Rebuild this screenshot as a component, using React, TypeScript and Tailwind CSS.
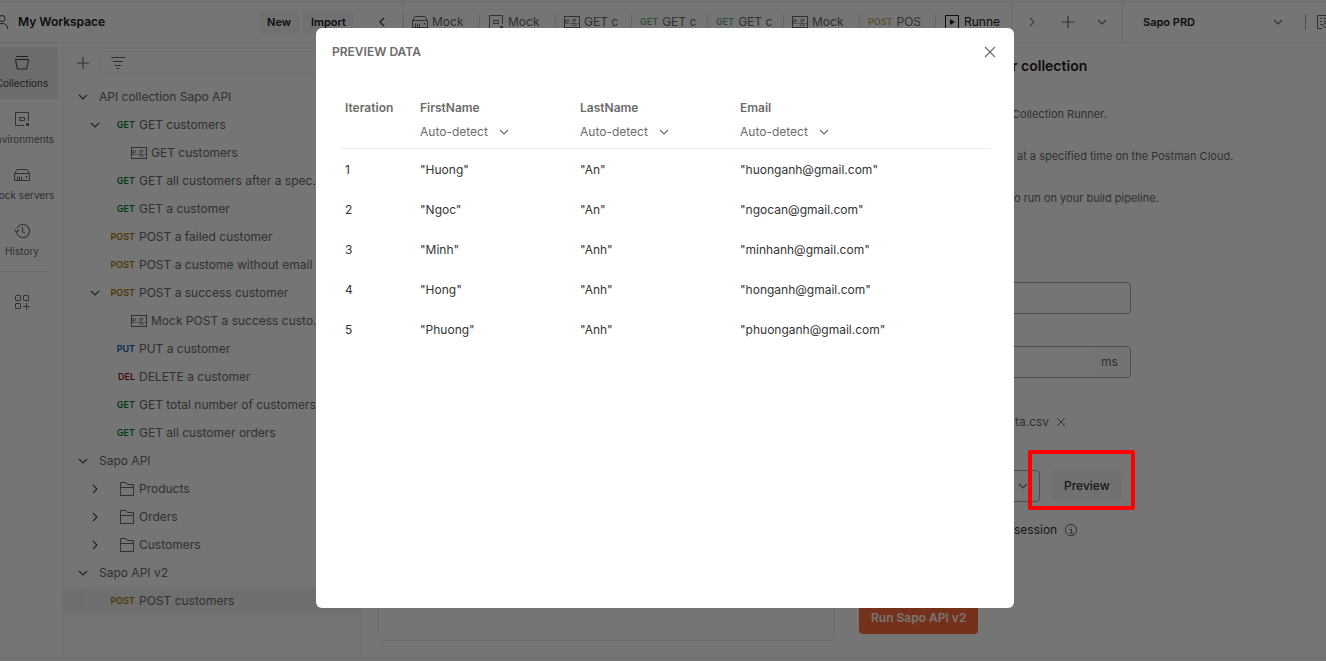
import type { ReactNode } from "react";

type IconProps = { className?: string };

function Glyph({ className = "size-4", children }: IconProps & { children: ReactNode }) {
  return (
    <svg
      viewBox="0 0 16 16"
      fill="none"
      stroke="currentColor"
      strokeWidth={1}
      className={`shrink-0 ${className}`}
      aria-hidden="true"
    >
      {children}
    </svg>
  );
}

const ChevronDown = (p: IconProps) => (
  <Glyph {...p}>
    <path d="M4 6l4 4 4-4" strokeWidth={1.1} />
  </Glyph>
);
const ChevronRight = (p: IconProps) => (
  <Glyph {...p}>
    <path d="M6 4l4 4-4 4" strokeWidth={1.1} />
  </Glyph>
);
const ChevronLeft = (p: IconProps) => (
  <Glyph {...p}>
    <path d="M10 4L6 8l4 4" strokeWidth={1.3} />
  </Glyph>
);
const Plus = (p: IconProps) => (
  <Glyph {...p}>
    <path d="M8 2v12M2 8h12" strokeWidth={1.2} />
  </Glyph>
);
const Close = (p: IconProps) => (
  <Glyph {...p}>
    <path d="M3 3l10 10M13 3L3 13" strokeWidth={1.1} />
  </Glyph>
);
const FilterLines = (p: IconProps) => (
  <Glyph {...p}>
    <path d="M1 2.5h14M3 6.5h10M4.5 10.5h7M6.5 13.5h3" />
  </Glyph>
);
const Person = (p: IconProps) => (
  <Glyph {...p}>
    <circle cx="8" cy="4.5" r="3" />
    <path d="M2.5 15v-1.5a5.5 4 0 0 1 11 0V15" />
  </Glyph>
);
const CollectionIcon = (p: IconProps) => (
  <Glyph {...p}>
    <path d="M2 1.5h12M1.5 4.5h13l-1.8 9.5H3.3z" />
  </Glyph>
);
const EnvironmentIcon = (p: IconProps) => (
  <Glyph {...p}>
    <path d="M14.5 10V1.5h-13v13H10M5.5 6.5h5v3h-5z" />
    <path d="M12 12h3v3h-3z" fill="currentColor" stroke="none" />
  </Glyph>
);
const ServerIcon = (p: IconProps) => (
  <Glyph {...p}>
    <path d="M.5 6.5L3 2.5h10l2.500 4v7H.5zM.5 6.500h15M3.500 9.500v4M5.500 9.500v4M7.500 9.500v4" />
    <path d="M11.500 9h2v1.500h-2z" fill="currentColor" stroke="none" />
  </Glyph>
);
const HistoryIcon = (p: IconProps) => (
  <Glyph {...p}>
    <path d="M2.500 9.500a6.600 6.600 0 1 0 .6-4.500M.5 6.500l2 2.500 2.500-2M8.500 4v4.700l2.500 1.500" strokeWidth={1.1} />
  </Glyph>
);
const GridPlusIcon = (p: IconProps) => (
  <Glyph {...p}>
    <rect x="1.500" y="1.500" width="5" height="5" rx=".5" />
    <rect x="9.500" y="1.500" width="5" height="5" rx=".5" />
    <rect x="1.500" y="9.500" width="5" height="5" rx=".5" />
    <path d="M12.500 9v6.500M9 12.500h6.500" />
  </Glyph>
);
const FolderIcon = (p: IconProps) => (
  <Glyph {...p}>
    <path d="M1.500 14.500v-13H7l1.500 2h6v11zM1.500 6.500h13" />
  </Glyph>
);
const PlayBoxIcon = (p: IconProps) => (
  <Glyph {...p}>
    <path d="M1.500 1.500h13v13h-13z" />
    <path d="M6 5l5 3-5 3z" fill="currentColor" stroke="none" />
  </Glyph>
);
const EnvQuickLook = (p: IconProps) => (
  <Glyph {...p}>
    <path d="M6 14.500H1.500v-13h13V7M4 4.500h2M7.500 4.500h5M4 7.500h2M7.500 7.500h3M4 10.500h2" />
    <path d="M6.500 11.500q3.500-4.500 8 0q-4.500 4.500-8 0z" />
  </Glyph>
);
const InfoIcon = (p: IconProps) => (
  <Glyph {...p}>
    <circle cx="8" cy="8" r="5.700" />
    <path d="M6.500 7.500h2v3.500M6.500 11h4M7.500 5h1" />
  </Glyph>
);

function ExampleIcon() {
  return (
    <span
      className="flex h-3 w-4 shrink-0 items-center justify-center border border-current font-['Liberation_Serif',serif] text-[10px] leading-none"
      aria-hidden="true"
    >
      <span className="pb-0.5">e.g.</span>
    </span>
  );
}

const methodColor = {
  GET: "text-[#007f31]",
  POST: "text-[#ad7a03]",
  PUT: "text-[#0053b8]",
  DEL: "text-[#8e1a10]",
};
type Method = keyof typeof methodColor;

function MethodTag({ method, className = "" }: { method: Method; className?: string }) {
  return (
    <span className={`text-[9px] font-semibold ${methodColor[method]} ${className}`}>{method}</span>
  );
}

type TreeRow = {
  name: string;
  kind: "collection" | "request" | "example" | "folder";
  method?: Method;
  open?: boolean;
  selected?: boolean;
};

const tree: TreeRow[] = [
  { kind: "collection", name: "API collection Sapo API" },
  { kind: "request", method: "GET", name: "GET customers", open: true },
  { kind: "example", name: "GET customers" },
  { kind: "request", method: "GET", name: "GET all customers after a spec..." },
  { kind: "request", method: "GET", name: "GET a customer" },
  { kind: "request", method: "POST", name: "POST a failed customer" },
  { kind: "request", method: "POST", name: "POST a custome without email" },
  { kind: "request", method: "POST", name: "POST a success customer", open: true },
  { kind: "example", name: "Mock POST a success custo..." },
  { kind: "request", method: "PUT", name: "PUT a customer" },
  { kind: "request", method: "DEL", name: "DELETE a customer" },
  { kind: "request", method: "GET", name: "GET total number of customers" },
  { kind: "request", method: "GET", name: "GET all customer orders" },
  { kind: "collection", name: "Sapo API" },
  { kind: "folder", name: "Products" },
  { kind: "folder", name: "Orders" },
  { kind: "folder", name: "Customers" },
  { kind: "collection", name: "Sapo API v2" },
  { kind: "request", method: "POST", name: "POST customers", selected: true },
];

function TreeItem({ row }: { row: TreeRow }) {
  if (row.kind === "collection") {
    return (
      <button className="flex h-7 w-full items-center gap-2 pl-3 text-left">
        <ChevronDown className="size-4 text-[#444444]" />
        {row.name}
      </button>
    );
  }
  if (row.kind === "example") {
    return (
      <button className="flex h-7 w-full items-center gap-1 pl-17 text-left">
        <ExampleIcon />
        <span className="whitespace-nowrap">{row.name}</span>
      </button>
    );
  }
  return (
    <button
      className={`flex h-7 w-full items-center text-left ${row.selected ? "bg-[#f2f2f2]" : ""}`}
    >
      <span className={`h-7 w-5 shrink-0 ${row.selected ? "border-r border-[#e6e6e6]" : ""}`} />
      <span className="flex w-5 shrink-0 items-center pl-1 text-[#444444]">
        {row.kind === "folder" && <ChevronRight />}
        {row.open && <ChevronDown />}
      </span>
      <span className="flex w-8 shrink-0 justify-end">
        {row.kind === "folder" ? <FolderIcon /> : <MethodTag method={row.method!} />}
      </span>
      <span className="pl-1 whitespace-nowrap">{row.name}</span>
    </button>
  );
}

const navItems = [
  { label: "Collections", Icon: CollectionIcon, active: true },
  { label: "Environments", Icon: EnvironmentIcon },
  { label: "Mock servers", Icon: ServerIcon },
  { label: "History", Icon: HistoryIcon },
];

const tabs: { label: string; icon: ReactNode; active?: boolean }[] = [
  { label: "Mock", icon: <ServerIcon /> },
  { label: "Mock", icon: <EnvironmentIcon /> },
  { label: "GET c", icon: <ExampleIcon /> },
  { label: "GET c", icon: <MethodTag method="GET" className="opacity-60" /> },
  { label: "GET c", icon: <MethodTag method="GET" className="opacity-60" /> },
  { label: "Mock", icon: <ExampleIcon /> },
  { label: "POS", icon: <MethodTag method="POST" className="opacity-60" /> },
  { label: "Runne", icon: <PlayBoxIcon />, active: true },
];

const people = [
  ["Huong", "An", "huonganh@gmail.com"],
  ["Ngoc", "An", "ngocan@gmail.com"],
  ["Minh", "Anh", "minhanh@gmail.com"],
  ["Hong", "Anh", "honganh@gmail.com"],
  ["Phuong", "Anh", "phuonganh@gmail.com"],
];

function TopBar() {
  return (
    <header className="flex h-10 shrink-0 items-stretch">
      <div className="flex w-[362px] shrink-0 items-center gap-1 pr-2">
        <Person className="-ml-1.5 size-4 text-[#444444]" />
        <span className="flex-1 pl-1 font-semibold text-[#212121]">My Workspace</span>
        <button className="h-6 rounded bg-[#f7f7f7] px-2 text-[11px] font-semibold text-[#212121]">
          New
        </button>
        <button className="h-6 rounded bg-[#f7f7f7] px-2 text-[11px] font-semibold text-[#212121]">
          Import
        </button>
      </div>
      <button
        aria-label="Scroll tabs left"
        className="flex w-10 shrink-0 items-center justify-center text-[#444444]"
      >
        <ChevronLeft />
      </button>
      <nav className="flex items-center border-x border-[#ededed]">
        {tabs.map((tab, i) => (
          <button
            key={i}
            className={`flex h-4 w-19 items-center gap-1 border-l border-[#e0e0e0] pl-2 whitespace-nowrap ${
              tab.active ? "text-[#212121]" : ""
            }`}
          >
            {tab.icon}
            <span>{tab.label}</span>
          </button>
        ))}
      </nav>
      <div className="flex shrink-0 items-center border-r border-[#ededed] pr-3 pl-3">
        <button aria-label="Scroll tabs right" className="mr-5 text-[#8c8c8c]">
          <ChevronRight />
        </button>
        <button aria-label="New tab" className="mr-4.5">
          <Plus />
        </button>
        <button aria-label="Tab options">
          <ChevronDown />
        </button>
      </div>
      <button className="flex w-[163px] shrink-0 items-center justify-between pl-5 text-[11px] font-semibold text-[#212121]">
        Sapo PRD
        <ChevronDown className="size-4 text-[#6b6b6b]" />
      </button>
      <div className="flex flex-1 items-center gap-2.5 pl-[19px]">
        <span className="h-4 w-px shrink-0 bg-[#a6a6a6]" />
        <button aria-label="Environment quick look">
          <EnvQuickLook />
        </button>
      </div>
    </header>
  );
}

function NavRail() {
  return (
    <nav className="w-[63px] shrink-0 border-r border-[#ededed] pt-1 pr-1 text-[10px] leading-4">
      {navItems.map(({ label, Icon, active }) => (
        <button
          key={label}
          className={`mb-1 -ml-3.5 flex h-13 w-18 flex-col items-center gap-1 rounded pt-2 whitespace-nowrap ${
            active ? "bg-[#ececec] text-[#444444]" : ""
          }`}
        >
          <Icon />
          {label}
        </button>
      ))}
      <div className="mr-2 border-t border-[#ededed]" />
      <button aria-label="Configure sidebar" className="mt-5.5 flex w-11 justify-center">
        <GridPlusIcon />
      </button>
    </nav>
  );
}

function Sidebar() {
  return (
    <aside className="w-[299px] shrink-0 overflow-hidden border-r border-[#ededed]">
      <div className="flex items-center gap-2 py-2 pl-3">
        <button aria-label="Create">
          <Plus />
        </button>
        <label className="flex h-6 flex-1 items-center rounded-sm border border-[#f2f2f2] pl-2.5">
          <FilterLines />
          <input aria-label="Filter" className="w-full outline-none" />
        </label>
      </div>
      {tree.map((row, i) => (
        <TreeItem key={i} row={row} />
      ))}
    </aside>
  );
}

function RunPanel() {
  return (
    <main className="flex flex-1 gap-6 pl-4 leading-4">
      <div className="mb-4 w-[457px] shrink-0 rounded border border-[#ededed]" />
      <section className="flex flex-1 flex-col items-start pt-[11px] pb-[23px]">
        <h2 className="pl-[153px] text-[14px] leading-6 font-semibold text-[#212121]">r collection</h2>
        <div className="flex flex-col gap-[26px] pt-7 text-[11px]">
          <p className="pl-[153px]">Collection Runner.</p>
          <p className="pl-[158px]">at a specified time on the Postman Cloud.</p>
          <p className="pl-[155px]">o run on your build pipeline.</p>
        </div>
        <input
          aria-label="Iterations"
          className="mt-19 h-8 w-[272px] rounded border border-[#a6a6a6] px-2"
        />
        <div className="mt-8 flex h-8 w-[272px] rounded border border-[#a6a6a6]">
          <input aria-label="Delay" className="min-w-0 flex-1 px-2 outline-none" />
          <span className="flex w-[37px] items-center rounded-r bg-[#fafafa] pl-2">ms</span>
        </div>
        <div className="mt-9 flex items-center gap-1 pl-[156px]">
          ta.csv
          <button aria-label="Remove file">
            <Close className="size-4 p-0.5 text-[#444444]" />
          </button>
        </div>
        <div className="mt-10 flex gap-3">
          <button
            aria-label="Data file type"
            className="flex h-8 w-[181px] items-center justify-end rounded border border-[#a6a6a6] pr-2"
          >
            <ChevronDown />
          </button>
          <div className="relative">
            <button className="h-8 rounded bg-[#f7f7f7] px-3 font-medium text-[#333333]">
              Preview
            </button>
            <span className="absolute -top-5 -right-3.25 -bottom-2 -left-6 z-20 rounded-xs border-4 border-[#ff0000]" />
          </div>
        </div>
        <p className="mt-5 flex items-center gap-1.5 pl-[155px] text-[#333333]">
          session
          <InfoIcon className="size-4 text-[#6b6b6b]" />
        </p>
        <button className="mt-auto h-8 rounded bg-[#ff6c37] px-3 font-semibold text-white">
          Run Sapo API v2
        </button>
      </section>
    </main>
  );
}

function TypeSelect({ column }: { column: string }) {
  return (
    <span className="relative inline-flex items-center font-normal">
      <select
        aria-label={`${column} type`}
        className="w-24 appearance-none bg-transparent leading-4 text-[#6b6b6b] outline-none"
      >
        <option>Auto-detect</option>
      </select>
      <ChevronDown className="pointer-events-none absolute right-1 size-4" />
    </span>
  );
}

function PreviewDialog() {
  return (
    <div className="fixed inset-0 z-10 flex items-start justify-center bg-black/54 pt-7 pl-1">
      <div
        role="dialog"
        aria-labelledby="preview-title"
        className="min-h-[580px] w-[698px] rounded-md bg-white"
      >
        <div className="flex h-12 items-center justify-between pr-4 pl-4">
          <h1 id="preview-title" className="font-semibold">
            PREVIEW DATA
          </h1>
          <button aria-label="Close">
            <Close />
          </button>
        </div>
        <div className="px-6 pt-5">
          <table className="w-full table-fixed text-left">
            <thead>
              <tr className="border-b border-[#ededed] align-top">
                <th scope="col" className="w-[75px] px-1.25 pt-1 leading-4 font-semibold">
                  Iteration
                </th>
                {["FirstName", "LastName", "Email"].map((column) => (
                  <th
                    key={column}
                    scope="col"
                    className="px-1.25 pt-1 pb-2 leading-4 font-semibold not-last:w-40"
                  >
                    <div className="mb-2">{column}</div>
                    <TypeSelect column={column} />
                  </th>
                ))}
              </tr>
            </thead>
            <tbody className="text-[#333333]">
              {people.map((cells, i) => (
                <tr key={i} className="h-10">
                  <td className="px-1.25 pt-0.5">{i + 1}</td>
                  {cells.map((cell, j) => (
                    <td key={j} className="px-1.25 pt-0.5">{`"${cell}"`}</td>
                  ))}
                </tr>
              ))}
            </tbody>
          </table>
        </div>
      </div>
    </div>
  );
}

export default function App() {
  return (
    <div className="flex min-h-screen flex-col overflow-hidden bg-white pt-px font-['Inter',sans-serif] text-[12px] text-[#6b6b6b]">
      <div className="border-y border-[#ededed]">
        <TopBar />
      </div>
      <div className="flex flex-1 items-stretch">
        <NavRail />
        <Sidebar />
        <RunPanel />
      </div>
      <footer className="h-1 border-t border-[#ededed] bg-[#f9f9f9]" />
      <PreviewDialog />
    </div>
  );
}
